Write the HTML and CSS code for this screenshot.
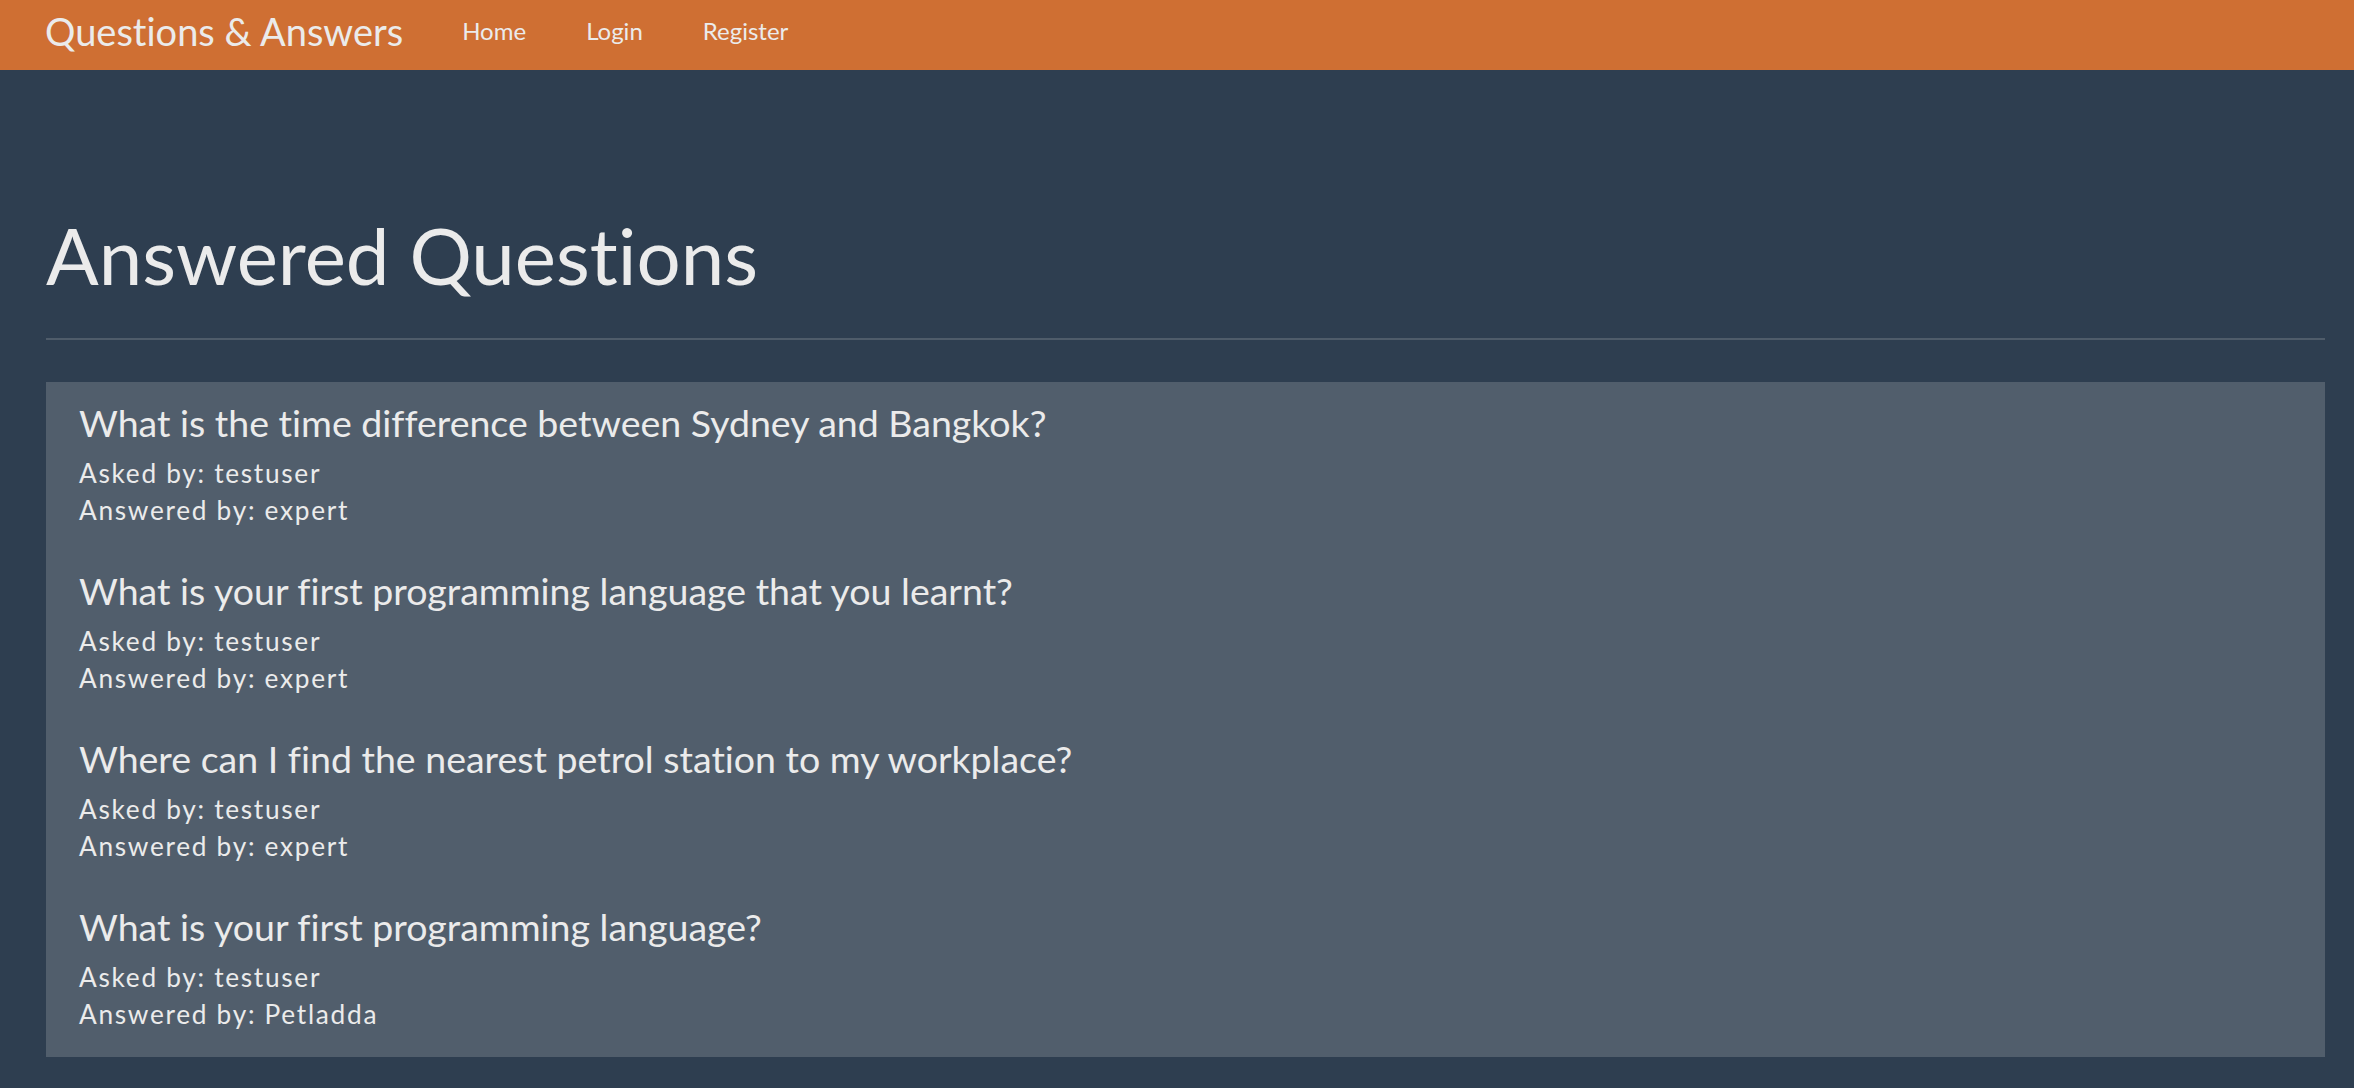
FILE: index.html
```html
<!DOCTYPE html>
<html lang="en">
<head>
<meta charset="utf-8">
<title>Answered Questions</title>
<link rel="stylesheet" href="styles.css">
</head>
<body>
<nav class="navbar">
  <a class="brand" href="#">Questions &amp; Answers</a>
  <ul class="nav-links">
    <li><a href="#">Home</a></li>
    <li><a href="#">Login</a></li>
    <li><a href="#">Register</a></li>
  </ul>
</nav>
<main class="container">
  <h1 class="page-title">Answered Questions</h1>
  <hr class="divider">
  <section class="question-list">
    <article class="question">
      <h4 class="question-title">What is the time difference between Sydney and Bangkok?</h4>
      <div class="meta">Asked by: testuser</div>
      <div class="meta">Answered by: expert</div>
    </article>
    <article class="question">
      <h4 class="question-title">What is your first programming language that you learnt?</h4>
      <div class="meta">Asked by: testuser</div>
      <div class="meta">Answered by: expert</div>
    </article>
    <article class="question">
      <h4 class="question-title">Where can I find the nearest petrol station to my workplace?</h4>
      <div class="meta">Asked by: testuser</div>
      <div class="meta">Answered by: expert</div>
    </article>
    <article class="question">
      <h4 class="question-title">What is your first programming language?</h4>
      <div class="meta">Asked by: testuser</div>
      <div class="meta">Answered by: Petladda</div>
    </article>
  </section>
</main>
</body>
</html>
```
FILE: styles.css
```css
html, body {
  margin: 0;
  padding: 0;
}
body {
  background: #2e3e50;
  color: #ebebeb;
  font-family: Lato, "Open Sans", "Liberation Sans", sans-serif;
  font-weight: 400;
  font-variant-ligatures: no-common-ligatures;
  min-height: 1088px;
}
a {
  color: #ebebeb;
  text-decoration: none;
}
.navbar {
  background: #cf6f33;
  height: 70px;
  display: flex;
  align-items: flex-start;
  padding-left: 45px;
  box-sizing: border-box;
}
.brand {
  font-size: 38px;
  line-height: 62px;
  margin-right: 29px;
}
.nav-links {
  list-style: none;
  margin: 0;
  padding: 0;
  display: flex;
}
.nav-links a {
  display: block;
  font-size: 24px;
  line-height: 61px;
  padding: 0 30px;
}
.container {
  padding: 143px 29px 0 46px;
}
.page-title {
  font-size: 78px;
  font-weight: 400;
  line-height: 1.1;
  margin: 0;
}
.divider {
  border: 0;
  border-top: 2px solid #4f5c6a;
  margin: 39px 0 42px;
}
.question-list {
  background: #515e6c;
  padding: 20px 33px 23px;
  display: flex;
  flex-direction: column;
  gap: 40px;
}
.question-title {
  font-size: 37.5px;
  font-weight: 400;
  line-height: 42px;
  margin: 0 0 11px;
}
.meta {
  font-size: 26.25px;
  line-height: 37.5px;
  letter-spacing: 1.7px;
}
```
